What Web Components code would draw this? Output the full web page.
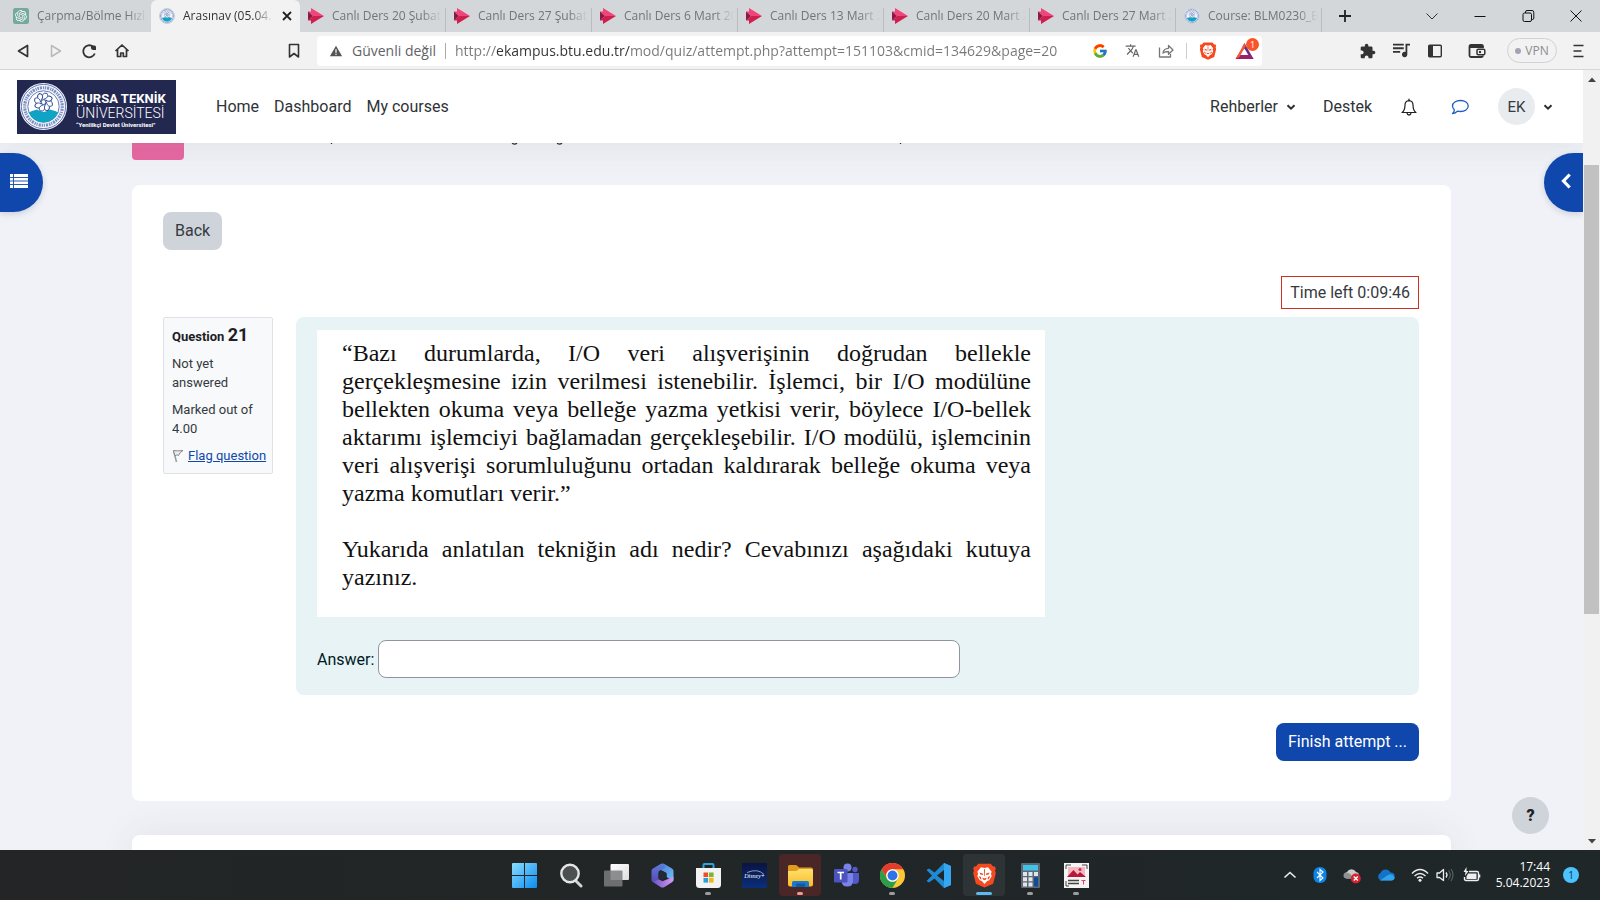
<!DOCTYPE html>
<html lang="tr">
<head>
<meta charset="utf-8">
<title>Arasınav (05.04</title>
<style>
  html, body { margin: 0; height: 100%; }
  body { font-family: Roboto, "Liberation Sans", sans-serif; font-size: 16px; color: #343a40; overflow: hidden; }
</style>
</head>
<body>
<desktop-screen>
  <browser-tabs slot="tabs">
    <browser-tab icon="gpt">Çarpma/Bölme Hızlandırma</browser-tab>
    <browser-tab icon="seal" active>Arasınav (05.04.2023)</browser-tab>
    <browser-tab icon="play" line>Canlı Ders 20 Şubat 2023</browser-tab>
    <browser-tab icon="play" line>Canlı Ders 27 Şubat 2023</browser-tab>
    <browser-tab icon="play" line>Canlı Ders 6 Mart 2023</browser-tab>
    <browser-tab icon="play" line>Canlı Ders 13 Mart 2023</browser-tab>
    <browser-tab icon="play" line>Canlı Ders 20 Mart 2023</browser-tab>
    <browser-tab icon="play" line>Canlı Ders 27 Mart 2023</browser-tab>
    <browser-tab icon="seal" line>Course: BLM0230_B</browser-tab>
  </browser-tabs>
  <browser-toolbar slot="toolbar"></browser-toolbar>
  <site-page slot="page">
    <site-nav slot="nav"></site-nav>
    <quiz-card>
      <question-info slot="info" number="21"></question-info>
      <question-body slot="question">
        <p>“Bazı durumlarda, I/O veri alışverişinin doğrudan bellekle gerçekleşmesine izin verilmesi istenebilir. İşlemci, bir I/O modülüne bellekten okuma veya belleğe yazma yetkisi verir, böylece I/O-bellek aktarımı işlemciyi bağlamadan gerçekleşebilir. I/O modülü, işlemcinin veri alışverişi sorumluluğunu ortadan kaldırarak belleğe okuma veya yazma komutları verir.”</p>
        <p>Yukarıda anlatılan tekniğin adı nedir? Cevabınızı aşağıdaki kutuya yazınız.</p>
      </question-body>
    </quiz-card>
  </site-page>
  <task-bar slot="taskbar"></task-bar>
</desktop-screen>

<script>
const sealArt = `<circle cx="24" cy="24" r="24" fill="#f4f6fb"/><circle cx="24" cy="24" r="22.6" fill="none" stroke="#3c5ba0" stroke-width=".8"/>
<circle cx="24" cy="24" r="19.2" fill="none" stroke="#7a8fc2" stroke-width="3.200" stroke-dasharray="1.5 .9 2.2 1 1.2 .8"/>
<circle cx="24" cy="24" r="16" fill="#fff" stroke="#3c5ba0" stroke-width=".8"/>
<path d="M9 30q6-3 15-4 9 1 15 4A16 16 0 0 1 9 30z" fill="#0fa3c4"/>
<circle cx="24" cy="19.500" r="10" fill="#fff"/>
<g fill="none" stroke="#2b4b96" stroke-width="1" transform="translate(24 19.500)">${[0, 45, 90, 135, 180, 225, 270, 315].map(a => `<path d="M0-3c3.500-.5 5.500-3 3.500-6q-3-.8-4.500 1.500" transform="rotate(${a})"/>`).join('')}<circle r="2.500"/></g>`;
const braveArt = `<path d="M8 1h16l3 3.500 2-.3 1.500 3-1 2.600 1 3.200-3.500 13.500L16 31.500 5 26.500 1.500 13l1-3.200-1-2.600L3 4.200l2 .3z" fill="#f5491f"/>
<path d="M16 6.500l4.500-1 4.700 5.600-1 2.600 1 3.300-3.200 5-2.500 1L16 27l-3.500-4-2.500-1-3.200-5 1-3.300-1-2.600 4.700-5.600z" fill="#fff"/>
<path d="M9.500 12l5 1.800-.8 1.600-3-.8zM22.500 12l-5 1.800.8 1.600 3-.8zM15.300 8h1.400l-.3 9h-.8zM8.500 16.500l3 1.500.5 3-1.500-.5zM23.500 16.500l-3 1.500-.5 3 1.500-.5zM13 18.500l3 1.300 3-1.300-1.200 2.500-1.800 1-1.800-1z" fill="#f5491f"/>`;
const ICONS = {
  seal: ['0 0 48 48', sealArt],
  gpt: ['0 0 24 24', `<rect width="24" height="24" rx="3.500" fill="#75a99c"/><g transform="translate(3.200 3.200) scale(.73)"><path fill="#fff" d="M22.2819 9.8211a5.9847 5.9847 0 0 0-.5157-4.9108 6.0462 6.0462 0 0 0-6.5098-2.9A6.0651 6.0651 0 0 0 4.9807 4.1818a5.9847 5.9847 0 0 0-3.9977 2.9 6.0462 6.0462 0 0 0 .7427 7.0966 5.98 5.98 0 0 0 .511 4.9107 6.051 6.051 0 0 0 6.5146 2.9001A5.9847 5.9847 0 0 0 13.2599 24a6.0557 6.0557 0 0 0 5.7718-4.2058 5.9894 5.9894 0 0 0 3.9977-2.9001 6.0557 6.0557 0 0 0-.7475-7.0729zm-9.022 12.6081a4.4755 4.4755 0 0 1-2.8764-1.0408l.1419-.0804 4.7783-2.7582a.7948.7948 0 0 0 .3927-.6813v-6.7369l2.02 1.1686a.071.071 0 0 1 .038.052v5.5826a4.504 4.504 0 0 1-4.4945 4.4944zm-9.6607-4.1254a4.4708 4.4708 0 0 1-.5346-3.0137l.142.0852 4.783 2.7582a.7712.7712 0 0 0 .7806 0l5.8428-3.3685v2.3324a.0804.0804 0 0 1-.0332.0615L9.74 19.9502a4.4992 4.4992 0 0 1-6.1408-1.6464zM2.3408 7.8956a4.485 4.485 0 0 1 2.3655-1.9728V11.6a.7664.7664 0 0 0 .3879.6765l5.8144 3.3543-2.0201 1.1685a.0757.0757 0 0 1-.071 0l-4.8303-2.7865A4.504 4.504 0 0 1 2.3408 7.872zm16.5963 3.8558L13.1038 8.364 15.1192 7.2a.0757.0757 0 0 1 .071 0l4.8303 2.7913a4.4944 4.4944 0 0 1-.6765 8.1042v-5.6772a.79.79 0 0 0-.407-.667zm2.0107-3.0231l-.142-.0852-4.7735-2.7818a.7759.7759 0 0 0-.7854 0L9.409 9.2297V6.8974a.0662.0662 0 0 1 .0284-.0615l4.8303-2.7866a4.4992 4.4992 0 0 1 6.6802 4.66zM8.3065 12.863l-2.02-1.1638a.0804.0804 0 0 1-.038-.0567V6.0742a4.4992 4.4992 0 0 1 7.3757-3.4537l-.142.0805L8.704 5.459a.7948.7948 0 0 0-.3927.6813zm1.0976-2.3654l2.602-1.4998 2.6069 1.4998v2.9994l-2.5974 1.4997-2.6067-1.4997Z"/></g>`],
  play: ['0 0 16 16', `<path d="M3 0l13 8H5L0 3.500h3z" fill="#f0447a"/><path d="M3 16l13-8H5L0 12.500h3z" fill="#cf1f4f"/><path d="M0 3.500l5 4.500-5 4.500z" fill="#8c1845"/>`],
  x: ['0 0 12 12', '<path d="M2 2l8 8M10 2l-8 8" stroke="#222" stroke-width="1.800" fill="none"/>'],
  plus: ['0 0 14 14', '<path d="M7 1v12M1 7h12" stroke="#222" stroke-width="1.800"/>'],
  wchev: ['0 0 14 14', '<path d="M1.500 4.500L7 10l5.500-5.500" stroke="#333" fill="none"/>'],
  wmin: ['0 0 14 14', '<path d="M1.500 7.500h11" stroke="#111"/>'],
  wmax: ['0 0 14 14', '<rect x="2" y="4" width="8.500" height="8.500" rx="1.500" fill="none" stroke="#111"/><path d="M4.500 4V3q0-1.500 1.500-1.500h5q1.800 0 1.800 1.800V9q0 1.500-1.500 1.500h-.8" fill="none" stroke="#111"/>'],
  wclose: ['0 0 14 14', '<path d="M1.500 1.500l11 11M12.500 1.500l-11 11" stroke="#111"/>'],
  back: ['0 0 16 16', '<path d="M12.500 2.500v11L3.500 8z" fill="none" stroke="#333" stroke-width="1.700" stroke-linejoin="round"/>'],
  fwd: ['0 0 16 16', '<path d="M3.500 2.500v11l9-5.500z" fill="none" stroke="#b9b9b9" stroke-width="1.500" stroke-linejoin="round"/>'],
  reload: ['0 0 16 16', '<path d="M13.800 10.500A6 6 0 1 1 12 3.600" fill="none" stroke="#333" stroke-width="1.800"/><path d="M10 2.500h3.500q1.500 0 1.500 1.500v3h-2.500Q10 7 10 4.500z" fill="#333"/>'],
  home: ['0 0 16 16', '<path d="M1.500 8L8 2l6.500 6M3.500 6.500v7h3.200V10h2.600v3.500h3.200v-7" fill="none" stroke="#333" stroke-width="1.700" stroke-linejoin="round"/>'],
  mark: ['0 0 16 16', '<path d="M3.500 1.500h9v12.500L8 10.500 3.500 14z" fill="none" stroke="#333" stroke-width="1.600" stroke-linejoin="round"/>'],
  warn: ['0 0 16 16', '<path d="M8 2l7 12H1z" fill="#555"/><path d="M8 6v4M8 11.200v1.500" stroke="#fff" stroke-width="1.400"/>'],
  google: ['3 3 42 42', '<path fill="#FFC107" d="M43.611 20.083H42V20H24v8h11.303c-1.649 4.657-6.08 8-11.303 8-6.627 0-12-5.373-12-12s5.373-12 12-12c3.059 0 5.842 1.154 7.961 3.039l5.657-5.657C34.046 6.053 29.268 4 24 4 12.955 4 4 12.955 4 24s8.955 20 20 20 20-8.955 20-20c0-1.341-.138-2.65-.389-3.917z"/><path fill="#FF3D00" d="m6.306 14.691 6.571 4.819C14.655 15.108 18.961 12 24 12c3.059 0 5.842 1.154 7.961 3.039l5.657-5.657C34.046 6.053 29.268 4 24 4 16.318 4 9.656 8.337 6.306 14.691z"/><path fill="#4CAF50" d="M24 44c5.166 0 9.860-1.977 13.409-5.192l-6.190-5.238A11.910 11.910 0 0 1 24 36c-5.202 0-9.619-3.317-11.283-7.946l-6.522 5.025C9.505 39.556 16.227 44 24 44z"/><path fill="#1976D2" d="M43.611 20.083H42V20H24v8h11.303a12.040 12.040 0 0 1-4.087 5.571l6.190 5.238C36.971 39.205 44 34 44 24c0-1.341-.138-2.650-.389-3.917z"/>'],
  translate: ['0 1 24 22', '<path fill="#666" d="M12.870 15.070l-2.540-2.510.030-.030c1.740-1.940 2.980-4.170 3.710-6.530H17V4h-7V2H8v2H1v1.990h11.170C11.500 7.920 10.440 9.750 9 11.350 8.070 10.320 7.300 9.190 6.690 8h-2c.730 1.630 1.730 3.170 2.980 4.560l-5.090 5.020L4 19l5-5 3.110 3.110.760-2.040zM18.500 10h-2L12 22h2l1.120-3h4.750L21 22h2l-4.500-12zm-2.620 7l1.620-4.330L19.120 17h-3.240z"/>'],
  share: ['0 0 16 16', '<path d="M1.500 4.500V14h11v-3M5 10q.5-4.500 5.500-4.700V2.500L15 7l-4.500 4.300V8.500Q7 8.500 5 10z" fill="none" stroke="#777" stroke-width="1.300" stroke-linejoin="round"/>'],
  brave: ['0 0 32 32', braveArt],
  bat: ['0 0 18 16', '<path d="M9 0l9 16h-4.500L6.800 4z" fill="#6b2a86"/><path d="M0 16l2.500-4h13L18 16z" fill="#9a1f6b"/><path d="M9 5.500l3.800 6.500H5.200z" fill="#fff"/><path d="M0 16L9 0l1.300 2.800L4 14z" fill="#ee5a35"/>'],
  puzzle: ['1 0 23 23', '<path fill="#333" d="M20.500 11H19V7c0-1.100-.9-2-2-2h-4V3.500C13 2.120 11.880 1 10.500 1S8 2.120 8 3.500V5H4c-1.100 0-1.990.9-1.990 2v3.800H3.500c1.490 0 2.700 1.210 2.700 2.700s-1.210 2.700-2.700 2.700H2V20c0 1.100.9 2 2 2h3.800v-1.500c0-1.490 1.210-2.700 2.700-2.700 1.490 0 2.700 1.210 2.700 2.700V22H17c1.100 0 2-.9 2-2v-4h1.500c1.380 0 2.500-1.120 2.500-2.500S21.880 11 20.500 11z"/>'],
  queue: ['3 3 19 19', '<path fill="#333" d="M15 5H3v2h12V5zm0 4H3v2h12V9zM3 15h8v-2H3v2zM17 5v9.180c-.31-.11-.65-.18-1-.18-1.660 0-3 1.340-3 3s1.340 3 3 3 3-1.340 3-3V7h3V5h-5z"/>'],
  panel: ['0 0 16 16', '<rect x="1.700" y="2.200" width="12.600" height="11.600" rx="1" fill="none" stroke="#333" stroke-width="1.400"/><path d="M2 2h4v12H2z" fill="#333"/>'],
  wallet: ['0 0 18 16', '<path d="M15 5V3.500Q15 2 13.500 2H3Q1.500 2 1.500 3.500v9Q1.500 14 3 14h10.500q1.500 0 1.500-1.500M1.500 4H15" fill="none" stroke="#333" stroke-width="1.800"/><rect x="9" y="6.300" width="7.800" height="5.400" rx="1.200" fill="#f2f2f2" stroke="#333" stroke-width="1.500"/><circle cx="12" cy="9" r="1.200" fill="#333"/>'],
  menu: ['0 0 12 16', '<path d="M1.500 2.500h10M1.500 8h8M1.500 13.500h10" stroke="#333" stroke-width="1.700"/>'],
  caret: ['0 0 10 10', '<path d="M1.500 3.200L5 6.700l3.500-3.500" stroke="#2b2f33" stroke-width="2" fill="none"/>'],
  bell: ['0 0 16 18', '<path d="M1 14.500q3-2 3-7.500 0-4 4-4.300Q12 3 12 7q0 5.500 3 7.500z" fill="none" stroke="#222" stroke-width="1.200" stroke-linejoin="round"/><path d="M8 .7v2M6 15q.3 2 2 2t2-2" stroke="#222" stroke-width="1.300" fill="none"/>'],
  chat: ['0 0 18 16', '<path d="M9.500 1.500c4.400 0 7.700 2.300 7.700 5.500s-3.300 5.500-7.700 5.500q-1.500 0-3-.4Q4.500 14.400 1.500 14.600q2-1.500 1.800-3.800Q1.500 9 1.500 7c0-3.200 3.600-5.500 8-5.500z" fill="none" stroke="#1f5cc4" stroke-width="1.300" stroke-linejoin="round"/>'],
  list: ['0 0 18 14', '<path d="M0 0h18v14H0z" fill="#fff"/><path d="M0 3.500h18M0 7h18M0 10.500h18M3.500 0v14" stroke="#0f47ad" stroke-width=".9"/>'],
  left: ['0 0 10 16', '<path d="M8.700 1.500L2.500 8l6.200 6.500" fill="none" stroke="#fff" stroke-width="3.200"/>'],
  flag: ['0 0 12 14', '<path d="M1.500 1.500L4.500 13" stroke="#999" stroke-width="1.500"/><path d="M1.500 1.500q4 .8 9.500 0-3.500 1.800-4.300 4.800-2-.8-3.800.4z" fill="#e9ecef" stroke="#888"/>'],
  up: ['0 0 10 6', '<path d="M0 6l5-5.500L10 6z" fill="#444"/>'],
  down: ['0 0 10 6', '<path d="M0 0l5 5.500L10 0z" fill="#444"/>'],
  win: ['0 0 25 25', '<defs><linearGradient id="g" x2="1" y2="1"><stop stop-color="#8adcff"/><stop offset="1" stop-color="#0a8cf0"/></linearGradient></defs><path fill="url(#g)" d="M1 0h11v12H0V1q0-1 1-1zM13 0h11q1 0 1 1v11H13zM0 13h12v12H1q-1 0-1-1zM13 13h12v11q0 1-1 1H13z"/>'],
  search: ['0 0 25 25', '<path d="M17 17l6 6" stroke="#d4d4d4" stroke-width="3" stroke-linecap="round"/><circle cx="12" cy="10.500" r="8.700" fill="#4b5052" stroke="#e6e6e6" stroke-width="2.400"/>'],
  taskview: ['0 0 25 25', '<defs><linearGradient id="g" x2="1" y2="1"><stop stop-color="#fff"/><stop offset="1" stop-color="#ddd"/></linearGradient></defs><rect x="6.500" y="1" width="18.500" height="16" rx="1" fill="url(#g)"/><rect x="0" y="7.500" width="18.500" height="16" rx="1" fill="#7b7d7e" opacity=".85"/>'],
  m365: ['0 0 25 25', '<defs><linearGradient id="a" x2="1" y2="1"><stop stop-color="#4a78d8"/><stop offset="1" stop-color="#6fc4f5"/></linearGradient><linearGradient id="b" y2="1" x2="0"><stop stop-color="#5b7fd8"/><stop offset="1" stop-color="#5a47b8"/></linearGradient><linearGradient id="c"><stop stop-color="#6a4fc4"/><stop offset="1" stop-color="#d59bf2"/></linearGradient></defs><path d="M14 .8L22 5.600q1.500 1 1.500 2.500v8.800q0 .6-.3 1L16.500 14V10L9 6z" fill="url(#a)"/><path d="M14 .8q-1.500-.8-3 0L3 5.600Q1.500 6.500 1.500 8v8.800q0 1.500 1.500 2.500l5.500-3V8.500L15 4.500z" fill="url(#b)"/><path d="M2.500 18.800l6-2.600 4 2 10.800-4.500v3.100q0 1.500-1.300 2.500l-7.500 4.600q-2 1-4 0z" fill="url(#c)"/><path d="M12.500 8l4 2.300v4.500l-4 2.300-4-2.300v-4.500z" fill="#222a38"/>'],
  store: ['0 0 25 25', '<path d="M7.500 7V2q0-1 1-1h8q1 0 1 1v5" fill="none" stroke="#2ea3e0" stroke-width="2"/><path d="M0 5h25v16.500q0 3.500-3.500 3.500h-18Q0 25 0 21.500z" fill="#f3f3f3"/><path d="M7.500 9.500h4.600v4.600H7.500z" fill="#e8502a"/><path d="M13 9.500h4.600v4.600H13z" fill="#7fb52b"/><path d="M7.500 15h4.600v4.600H7.500z" fill="#2a9fe0"/><path d="M13 15h4.600v4.600H13z" fill="#f5b51d"/>'],
  disney: ['0 0 25 25', '<defs><linearGradient id="g" x2="0" y2="1"><stop stop-color="#0a1440"/><stop offset="1" stop-color="#0b2e7c"/></linearGradient></defs><rect width="25" height="25" fill="url(#g)"/><path d="M5 9.500q11-4.500 17 2" fill="none" stroke="#b9d4ff" stroke-width=".7"/><text x="12.500" y="15" text-anchor="middle" font-family="Liberation Serif, serif" font-style="italic" font-size="6" fill="#fff">Disney+</text>'],
  folder: ['0 0 25 25', '<defs><linearGradient id="g" x2="0" y2="1"><stop stop-color="#ffdf6b"/><stop offset="1" stop-color="#f7bd2c"/></linearGradient></defs><path d="M0 3.500Q0 2 1.500 2h6q1 0 2 1l1.500 1.500H23q2 0 2 2V10H0z" fill="#e09d1c"/><path d="M0 8h8.500l2.500-2h12.500Q25 6 25 7.500v14q0 2-2 2H2q-2 0-2-2z" fill="url(#g)"/><path d="M4 24v-4.500q0-1.500 1.500-1.500h14q1.500 0 1.500 1.500V24z" fill="#1b79c9"/><path d="M8 20.500h9v3.500H8z" fill="#0d5aa6"/>'],
  teams: ['0 0 25 25', '<circle cx="21" cy="6.500" r="2.700" fill="#5059c9"/><circle cx="13.500" cy="4.500" r="4" fill="#7b83eb"/><path d="M17 10h8v7q0 4-4 4t-4-4z" fill="#5059c9"/><path d="M7.500 10H19v8q0 5.500-5.700 5.500T7.500 18z" fill="#7b83eb"/><rect x="0" y="6" width="13.500" height="13.500" rx="1.200" fill="#4b53bc"/><path d="M3.500 9.500h6.500M6.700 9.500v7" stroke="#fff" stroke-width="1.700"/>'],
  chrome: ['0 0 48 48', '<circle cx="24" cy="24" r="24" fill="#fcc934"/><path d="M3.200 12A24 24 0 0 0 24 48L34.400 30A12 12 0 0 1 13.600 30z" fill="#2c9e4b"/><path d="M3.200 12A24 24 0 0 1 44.800 12H24a12 12 0 0 0-10.400 18z" fill="#e33b2e"/><circle cx="24" cy="24" r="12" fill="#fff"/><circle cx="24" cy="24" r="9.500" fill="#2f73e8"/>'],
  code: ['0 0 25 25', '<path d="M18 0l7 3v19l-7 3L8.500 15.500l-5.500 4L.5 18l5.500-5.500L.5 7 3 5.500l5.500 4zM18 7l-7 5.500 7 5.500z" fill="#1f8ad2" fill-rule="evenodd"/><path d="M18 0l7 3v19l-7 3z" fill="#35a7f0"/>'],
  calc: ['0 0 25 25', '<rect x="3" y="0" width="19" height="25" rx="1" fill="#5d6873"/><rect x="5" y="2" width="15" height="5.500" fill="#3fc3e6"/><g fill="#dfe5ea"><path d="M5 9h4v4H5zM10.500 9h4v4h-4zM5 14.200h4v4H5zM10.500 14.200h4v4h-4zM5 19.400h4v4H5zM10.500 19.400h4v4h-4zM16 9h4v4h-4z"/></g><path d="M16 14.200h4v9.200h-4z" fill="#0f4b9b"/>'],
  snip: ['0 0 25 25', '<path d="M0 0h25v25H0z" fill="#f4f4f4"/><path d="M2 6V2h5M18 2h5v4M2 18v5h3" fill="none" stroke="#444"/><path d="M4 4h17v10H4z" fill="#f3b7c0"/><path d="M3 14l6.500-7 4 4.500 2.500-2.500 6 5z" fill="#b8173c"/><circle cx="16" cy="6.500" r="1.500" fill="#d32950"/><path d="M4 17.500h11M4 20.500h11" stroke="#444" stroke-width="1.300"/><path d="M17.500 17.500h4M19.500 17.500v4" stroke="#d46"/>'],
  tchev: ['0 0 14 14', '<path d="M1.500 9.500L7 4.500l5.500 5" fill="none" stroke="#eee" stroke-width="1.600"/>'],
  bt: ['0 0 14 18', '<rect x=".5" y="1" width="13" height="16" rx="6" fill="#0a84e8"/><path d="M4 6l6 6-3 2.500v-11L10 6l-6 6" fill="none" stroke="#fff" stroke-width="1.100"/>'],
  clouderr: ['0 0 18 18', '<path d="M3.500 12.500a3.500 3.500 0 0 1 .5-6.500 5 5 0 0 1 9 0 3.500 3.500 0 0 1 1.500 6.500z" fill="#c9cbcc"/><path d="M3.500 12.500a3 3 0 0 1 0-6q4 0 7 6z" fill="#8f9293"/><circle cx="12.800" cy="12.500" r="5" fill="#d8232f"/><path d="M10.800 10.500l4 4M14.800 10.500l-4 4" stroke="#fff" stroke-width="1.400"/>'],
  cloud: ['0 0 18 12', '<path d="M4 11.500a4 4 0 0 1-.5-7.500 5.500 5.500 0 0 1 10-.5 4 4 0 0 1 .5 8z" fill="#1473c6"/><path d="M3 11.500L11 6q4-2.500 6.500 2.500 0 3-3.500 3z" fill="#31a4ee"/>'],
  wifi: ['0 0 18 14', '<path d="M1 5.500q8-8 16 0M3.500 8q5.500-5 11 0M6 10.300q3-2.500 6 0" fill="none" stroke="#eee" stroke-width="1.400"/><circle cx="9" cy="12.200" r="1.500" fill="#eee"/>'],
  sound: ['0 0 18 14', '<path d="M1 5h2.500L7.500 1.500v11L3.500 9.500H1z" fill="none" stroke="#eee" stroke-width="1.300" stroke-linejoin="round"/><path d="M10 4.500q2 2.500 0 5" fill="none" stroke="#eee" stroke-width="1.300"/><path d="M12.500 2.500q3.500 4.500 0 9M15 1q4 6 0 12" fill="none" stroke="#5d6364" stroke-width="1.100"/>'],
  battery: ['0 0 18 16', '<path d="M6 4.500h8q1.500 0 1.500 1.500v6q0 1.500-1.500 1.500H3Q1.500 13.500 1.500 12v-2" fill="none" stroke="#eee" stroke-width="1.400"/><path d="M5 6.500h8.500V12H3.500V9.500z" fill="#eee"/><path d="M16.500 7.500v3" stroke="#eee" stroke-width="1.600"/><path d="M3.500 0L.5 5h2l-.5 4 3.500-5h-2z" fill="#eee"/>']
};

class Piece extends HTMLElement {
  connectedCallback() {
    if (this.shadowRoot) return;
    const t = document.createElement('template');
    t.innerHTML = '<style>:host,*{box-sizing:border-box}button{font:inherit;color:inherit;border:0;background:none;padding:0;margin:0;cursor:pointer}' + this.css() + '</style>' + this.html();
    this.attachShadow({ mode: 'open' }).append(t.content.cloneNode(true));
  }
}
const def = (name, css, html) => customElements.define(name, class extends Piece {
  css() { return css; }
  html() { return typeof html === 'function' ? html(this) : html; }
});
const icon = (n, w, h = w) => `<ui-icon name="${n}" w="${w}" h="${h}"></ui-icon>`;

def('ui-icon', ':host{display:block;flex:none;line-height:0}svg{display:block}', el => {
  const [box, art] = ICONS[el.getAttribute('name')];
  return `<svg width="${el.getAttribute('w')}" height="${el.getAttribute('h')}" viewBox="${box}" aria-hidden="true">${art}</svg>`;
});

def('desktop-screen', `:host{display:grid;grid-template-rows:auto auto minmax(0,1fr) auto;height:100vh}`,
  '<slot name="tabs"></slot><slot name="toolbar"></slot><slot name="page"></slot><slot name="taskbar"></slot>');

def('browser-tabs', `:host{display:flex;height:32px;padding-left:5px;background:#d3d7da;font-family:"Open Sans","Noto Sans",sans-serif;font-size:12px;color:#70757a}
  .strip{display:flex}
  .new{width:46px;display:grid;place-items:center}
  .win{margin-left:auto;display:flex}
  .win button{width:48px;display:grid;place-items:center}`,
  `<div class="strip" role="tablist"><slot></slot></div><button class="new" aria-label="Yeni sekme">${icon('plus', 14)}</button>
  <div class="win"><button aria-label="Sekme ara">${icon('wchev', 14)}</button><button aria-label="Küçült">${icon('wmin', 14)}</button><button aria-label="Geri yükle">${icon('wmax', 14)}</button><button aria-label="Kapat">${icon('wclose', 14)}</button></div>`);

def('browser-tab', `:host{display:block;width:146px}
  :host([active]){width:149px;background:#f2f2f2;color:#333;border-radius:6px 6px 0 0}
  .tab{display:flex;align-items:center;height:32px;padding:0 4px 0 8px;position:relative}
  :host([line]) .tab::after{content:"";position:absolute;right:0;top:8px;bottom:0;width:1px;background:#b9bdc0}
  .hit{display:flex;align-items:center;gap:8px;flex:1;min-width:0;text-align:left}
  .label{flex:1;white-space:nowrap;overflow:hidden;line-height:20px;-webkit-mask-image:linear-gradient(90deg,#000 calc(100% - 20px),transparent);mask-image:linear-gradient(90deg,#000 calc(100% - 20px),transparent)}
  .close{margin:0 3px 0 8px}`,
  el => `<div class="tab"><button class="hit" role="tab">${icon(el.getAttribute('icon'), 16)}<span class="label"><slot></slot></span></button>${el.hasAttribute('active') ? `<button class="close" aria-label="Sekmeyi kapat">${icon('x', 12)}</button>` : ''}</div>`);

def('browser-toolbar', `:host{display:flex;align-items:center;height:38px;background:#f2f2f2;border-bottom:1px solid #d5d6d7;padding:0 16px 0 15px;font-family:"Open Sans","Noto Sans",sans-serif}
  .navs{display:flex;gap:17px}
  .mark{margin-left:auto}
  .left{display:flex;align-items:center;width:287px}
  .bar{display:flex;align-items:center;flex:0 1 945px;height:30px;background:#fff;border-radius:4px;padding:0 8px 0 12px;margin-left:15px}
  .safe{font-size:14px;color:#5f6368;margin-left:9px;padding-right:9px;line-height:16px;border-right:1px solid #aaa;white-space:nowrap}
  input{flex:1;min-width:0;border:0;outline:0;padding:0 0 0 9px;font:inherit;font-size:14px;line-height:20px;height:24px;color:transparent;background:linear-gradient(90deg,#777 50px,#333 50px,#333 184px,#777 184px);-webkit-background-clip:text;background-clip:text}
  .acts{display:flex;align-items:center;gap:18px}
  .acts .sep{width:1px;height:16px;background:#ccc;margin:0 -6px}
  .bat{position:relative}
  .bat b{position:absolute;left:11px;top:-5px;width:13px;height:13px;border-radius:50%;background:#fb542b;color:#fff;font-size:9px;font-weight:400;line-height:13px;text-align:center}
  .ext{display:flex;align-items:center;gap:17px;margin-left:auto}
  .vpn{display:flex;align-items:center;gap:4px;height:25px;width:50px;justify-content:center;border:1px solid #d2d2d6;border-radius:13px;color:#8a8d91;font-size:12px}
  .vpn i{width:6px;height:6px;border-radius:50%;background:#a2a4b4}
  .w{margin:0 4px 0 8px}.m{margin-left:-2px}`,
  `<div class="left"><div class="navs"><button aria-label="Geri">${icon('back', 16)}</button><button aria-label="İleri">${icon('fwd', 16)}</button><button aria-label="Yenile">${icon('reload', 16)}</button><button aria-label="Ana sayfa">${icon('home', 16)}</button></div><button class="mark" aria-label="Yer işareti">${icon('mark', 16)}</button></div>
  <div class="bar">${icon('warn', 14)}<span class="safe">Güvenli değil</span><input aria-label="Adres" value="http://ekampus.btu.edu.tr/mod/quiz/attempt.php?attempt=151103&amp;cmid=134629&amp;page=20">
  <div class="acts"><button aria-label="Google">${icon('google', 14)}</button><button aria-label="Çevir">${icon('translate', 15)}</button><button aria-label="Paylaş">${icon('share', 16)}</button><span class="sep"></span><button aria-label="Brave Shields">${icon('brave', 18, 20)}</button><button class="bat" aria-label="Brave Rewards">${icon('bat', 19, 16)}<b>1</b></button></div></div>
  <div class="ext"><button aria-label="Uzantılar">${icon('puzzle', 16)}</button><button aria-label="Medya">${icon('queue', 17)}</button><button aria-label="Kenar çubuğu">${icon('panel', 16)}</button><button class="w" aria-label="Cüzdan">${icon('wallet', 18, 16)}</button><button class="vpn"><i></i>VPN</button><button class="m" aria-label="Menü">${icon('menu', 12, 16)}</button></div>`);

def('uni-logo', `:host{display:block}
  a{display:flex;align-items:center;gap:9px;width:159px;height:54px;padding-left:3px;background:#222850;color:#fff;text-decoration:none;white-space:nowrap}
  .t{display:grid;padding-top:12px;align-self:start}
  b{font-weight:700;font-size:13px;line-height:14px}
  span{font-weight:300;font-size:14px;line-height:14px}
  small{font-weight:700;font-size:6px;line-height:10px}`,
  `<a href="#">${icon('seal', 47)}<div class="t"><b>BURSA TEKNİK</b><span>ÜNİVERSİTESİ</span><small>“Yenilikçi Devlet Üniversitesi”</small></div></a>`);

def('site-nav', `:host{display:flex;flex:none;align-items:center;height:73px;padding:0 30px 0 17px;background:#fff;box-shadow:0 2px 36px rgba(60,70,90,.1);position:relative;z-index:2}
  nav{display:flex;align-items:center}
  a{color:#2f3337;text-decoration:none;line-height:20px}
  .main{gap:15px;margin-left:40px}
  .user{margin-left:auto;gap:27px}
  .drop{display:flex;align-items:center;gap:8px}
  .chat{margin-left:5px;margin-right:2px}
  .av{display:grid;place-items:center;width:37px;height:37px;border-radius:50%;background:#e9ecef;color:#343a40;font-size:15px}`,
  `<uni-logo></uni-logo><nav class="main"><a href="#">Home</a><a href="#">Dashboard</a><a href="#">My courses</a></nav>
  <nav class="user"><a class="drop" href="#">Rehberler ${icon('caret', 10)}</a><a href="#">Destek</a><button aria-label="Bildirimler">${icon('bell', 20, 18)}</button><button class="chat" aria-label="Mesajlar">${icon('chat', 18, 16)}</button><button class="drop"><span class="av">EK</span>${icon('caret', 10)}</button></nav>`);

def('site-page', `:host{display:flex;min-height:0;background:#f0f2f7}
  .view{flex:1;min-width:0;overflow:hidden;position:relative;display:flex;flex-direction:column}
  .content{flex:none;width:calc(100% - 264px);max-width:1320px;margin:0 auto}
  .head{height:42px;display:flex;align-items:start}
  .pink{width:52px;height:17px;border-radius:0 0 4px 4px;background:#e868a2}
  .bits{position:relative;z-index:3;width:720px;height:3px}
  .drawer{position:absolute;top:83px;height:59px;background:#0f47ad;display:flex;align-items:center;z-index:3;box-shadow:0 2px 6px rgba(60,70,110,.2);padding-bottom:3px}
  .l{left:0;width:43px;border-radius:0 30px 30px 0;padding-left:10px}
  .r{right:0;width:39px;border-radius:30px 0 0 30px;padding-left:17px}
  .next{height:40px;margin-top:34px;background:#fff;border-radius:8px;box-shadow:0 -2px 36px rgba(60,70,90,.08)}
  .help{position:absolute;right:34px;bottom:16px;width:37px;height:37px;border-radius:50%;background:#ced4da;color:#1d2125;font-weight:900}
  .scroll{flex:none;width:17px;background:#f1f1f1;display:flex;flex-direction:column;align-items:center;padding:7px 0 6px;z-index:4}
  .track{flex:1;width:15px;display:flex;flex-direction:column}
  .track::before{content:"";flex:83}
  .track i{flex:447;background:#c1c1c1}
  .track::after{content:"";flex:224}`,
  `<div class="view"><slot name="nav"></slot><div class="content"><div class="head"><div class="pink"></div><svg class="bits" viewBox="0 0 720 3" aria-hidden="true"><path d="M147.500 0v1M328 .3q3 1.700 5-.3M373 .3q3 1.700 5-.3M716.500 0v1" stroke="#333" stroke-width="1.300" fill="none"/></svg></div><slot></slot><div class="next"></div></div>
  <button class="drawer l" aria-label="Open course index">${icon('list', 18, 14)}</button><button class="drawer r" aria-label="Open block drawer">${icon('left', 10, 16)}</button><button class="help">?</button></div>
  <div class="scroll" aria-hidden="true">${icon('up', 8, 5)}<div class="track"><i></i></div>${icon('down', 8, 5)}</div>`);

def('quiz-card', `:host{display:block;min-height:616px;padding:27px 32px 0 31px;background:#fff;border-radius:8px}
  .btn{height:38px;border-radius:8px;padding:0 12px;line-height:20px}
  .back{background:#ced4da;color:#343a40;display:block}
  .finish{background:#0f47ad;color:#fff}
  .timer{display:block;width:fit-content;margin:26px 0 8px auto;border:1px solid #ca3120;padding:0 8px;line-height:31px;color:#343a40}
  .row{display:grid;grid-template-columns:110px minmax(0,1fr);gap:23px;align-items:start}
  .end{display:flex;justify-content:flex-end;margin-top:28px}`,
  `<button class="btn back">Back</button><div class="timer" role="timer">Time left 0:09:46</div>
  <div class="row"><slot name="info"></slot><slot name="question"></slot></div><div class="end"><button class="btn finish">Finish attempt ...</button></div>`);

def('question-info', `:host{display:block;border:1px solid #dee2e6;border-radius:2px;background:#f8f9fa;padding:6px 8px 8px;font-size:13px;line-height:19px;color:#343a40}
  h3{margin:0 0 6px;font-size:13px;font-weight:700;line-height:22px;color:#1d2125;white-space:nowrap}
  h3 span{font-size:18px}
  p{margin:0 0 8px}
  div{display:flex;align-items:center;gap:4px;white-space:nowrap}
  a{color:#0f47ad}`,
  el => `<h3>Question <span>${el.getAttribute('number')}</span></h3><p>Not yet answered</p><p>Marked out of 4.00</p><div>${icon('flag', 12, 14)}<a href="#">Flag question</a></div>`);

def('question-body', `:host{display:block;background:#e7f3f5;border-radius:8px;padding:13px 21px 17px;color:#001a1e}
  .sheet{max-width:728px;height:287px;background:#fff;padding:9px 14px 0 25px;font:24px/28px "Liberation Serif",serif;color:#111;text-align:justify}
  ::slotted(p){margin:0 0 28px}
  .answer{display:flex;align-items:center;gap:4px;margin-top:23px}
  input{width:582px;height:38px;border:1px solid #8f959e;border-radius:8px;background:#fff;font:inherit;padding:0 12px}`,
  `<div class="sheet"><slot></slot></div><div class="answer"><label for="a">Answer:</label><input id="a" type="text"></div>`);

def('task-app', `:host{display:grid;place-items:center;width:46px;height:50px}
  button{position:relative;display:grid;place-items:center;width:42px;height:42px;border-radius:4px}
  :host([hot]) button{background:#4a2626}
  :host([current]) button{background:#2e3436}
  :host([run]) button::after{content:"";position:absolute;bottom:1px;left:18px;width:6px;height:3px;border-radius:2px;background:#9b9d9e}
  :host([hot]) button::after{background:#f09a9a}
  :host([current]) button::after{left:13px;width:16px;background:#5db8ef}`,
  el => `<button aria-label="${el.getAttribute('label')}">${icon(el.getAttribute('icon'), 25)}</button>`);

def('task-bar', `:host{display:grid;grid-template-columns:1fr auto 1fr;align-items:center;height:50px;background:linear-gradient(90deg,#232526,#1f2729);color:#fff;font-family:"Open Sans","Noto Sans",sans-serif;font-size:12px}
  .apps{grid-column:2;display:flex}
  .tray{display:flex;align-items:center;justify-content:flex-end;gap:7px;padding-right:21px}
  .tray .g{margin-right:9px}
  .tray .v{margin-right:2px}
  .clock{text-align:right;line-height:16px;width:62px}
  .clock div{white-space:nowrap}
  .n{width:16px;height:16px;border-radius:50%;background:#4cc2ff;color:#10384c;font-size:10px;line-height:16px;text-align:center;margin-left:6px}`,
  `<div class="apps">
  <task-app icon="win" label="Başlat"></task-app><task-app icon="search" label="Ara"></task-app><task-app icon="taskview" label="Görev görünümü"></task-app><task-app icon="m365" label="Microsoft 365"></task-app><task-app icon="store" label="Microsoft Store" run></task-app><task-app icon="disney" label="Disney+"></task-app><task-app icon="folder" label="Dosya Gezgini" run hot></task-app><task-app icon="teams" label="Teams"></task-app><task-app icon="chrome" label="Chrome" run></task-app><task-app icon="code" label="Visual Studio Code"></task-app><task-app icon="brave" label="Brave" run current></task-app><task-app icon="calc" label="Hesap Makinesi" run></task-app><task-app icon="snip" label="Ekran Alıntısı" run></task-app></div>
  <div class="tray"><span class="g">${icon('tchev', 14)}</span><span class="g">${icon('bt', 14, 18)}</span><span class="g">${icon('clouderr', 18)}</span><span class="g">${icon('cloud', 18, 12)}</span>${icon('wifi', 18, 14)}<span class="v">${icon('sound', 18, 14)}</span>${icon('battery', 18, 16)}
  <div class="clock"><div>17:44</div><div>5.04.2023</div></div><button class="n">1</button></div>`);
</script>
</body>
</html>
